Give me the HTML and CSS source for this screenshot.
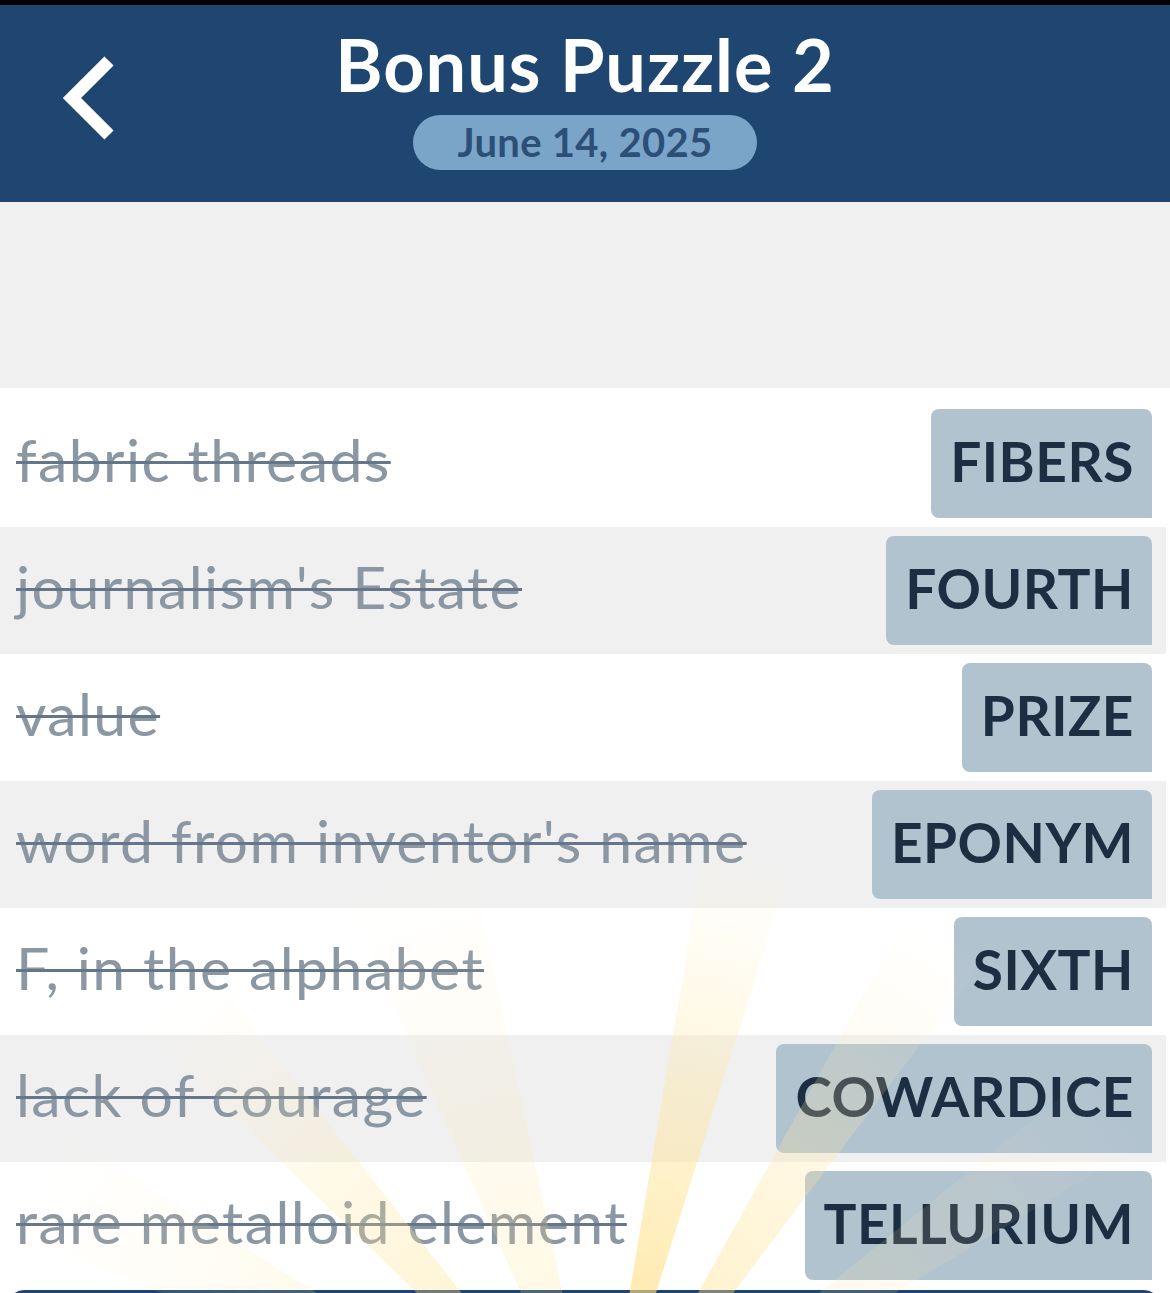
FILE: index.html
```html
<!DOCTYPE html>
<html lang="en">
<head>
<meta charset="utf-8">
<title>Bonus Puzzle 2</title>
<link rel="stylesheet" href="styles.css">
</head>
<body>
<div class="app">
  <div class="status"></div>
  <header class="header">
    <div class="back">
      <svg width="130" height="190" viewBox="0 0 130 190" aria-hidden="true">
        <polyline points="109,56 72,93 109,130" fill="none" stroke="#ffffff" stroke-width="13" stroke-linejoin="miter" stroke-linecap="butt"/>
      </svg>
    </div>
    <div class="titles">
      <h1 class="title">Bonus Puzzle 2</h1>
      <div class="date">June 14, 2025</div>
    </div>
    <div class="side"></div>
  </header>
  <div class="spacer"></div>
  <ul class="list">
    <li class="row"><span class="clue">fabric threads</span><span class="tile">FIBERS</span></li>
    <li class="row alt"><span class="clue">journalism's Estate</span><span class="tile">FOURTH</span></li>
    <li class="row"><span class="clue">value</span><span class="tile">PRIZE</span></li>
    <li class="row alt"><span class="clue">word from inventor's name</span><span class="tile">EPONYM</span></li>
    <li class="row"><span class="clue">F, in the alphabet</span><span class="tile">SIXTH</span></li>
    <li class="row alt"><span class="clue">lack of courage</span><span class="tile">COWARDICE</span></li>
    <li class="row"><span class="clue">rare metalloid element</span><span class="tile">TELLURIUM</span></li>
  </ul>
  <div class="bottom-bar"></div>
  <svg class="rays" width="1170" height="1293" viewBox="0 0 1170 1293" aria-hidden="true">
    <defs>
      <radialGradient id="fade" cx="600" cy="1470" r="640" gradientUnits="userSpaceOnUse">
        <stop offset="0.25" stop-color="#ffdf85" stop-opacity="0.75"/>
        <stop offset="0.6" stop-color="#ffe59c" stop-opacity="0.45"/>
        <stop offset="1" stop-color="#fff0c4" stop-opacity="0"/>
      </radialGradient>
    </defs>
    <g fill="url(#fade)">
      <polygon points="600,1470 -142,1170 -78,1046" opacity="0.35"/>
      <polygon points="600,1470 25,914 107,840" opacity="0.55"/>
      <polygon points="600,1470 274,739 434,688" opacity="0.3"/>
      <polygon points="600,1470 732,681 841,707" opacity="0.9"/>
      <polygon points="600,1470 988,770 1081,831" opacity="0.6"/>
      <polygon points="600,1470 1222,967 1286,1058" opacity="0.3"/>
    </g>
  </svg>
</div>
</body>
</html>
```

FILE: styles.css
```css
* {
  box-sizing: border-box;
}

html, body {
  margin: 0;
  padding: 0;
  background: #ffffff;
}

body {
  font-family: Lato, "Noto Sans", "Liberation Sans", sans-serif;
  width: 1170px;
  height: 1293px;
  overflow: hidden;
}

.app {
  position: relative;
  width: 1170px;
  height: 1293px;
  overflow: hidden;
  background: #ffffff;
}

.status {
  height: 5px;
  background: #000000;
}

.header {
  height: 197px;
  background: #1e4670;
  display: grid;
  grid-template-columns: 1fr auto 1fr;
  align-items: start;
}

.back {
  display: flex;
}

.back svg {
  display: block;
}

.titles {
  display: flex;
  flex-direction: column;
  align-items: center;
  padding-top: 17px;
}

.title {
  margin: 0;
  color: #ffffff;
  font-weight: 700;
  font-size: 72px;
  line-height: 84px;
  letter-spacing: 1px;
}

.date {
  margin-top: 9px;
  width: 344px;
  height: 55px;
  border-radius: 28px;
  background: #7ba5c8;
  color: #2b4f77;
  font-weight: 700;
  font-size: 40px;
  line-height: 55px;
  text-align: center;
  letter-spacing: 0.3px;
}

.spacer {
  height: 186px;
  background: #f0f0f0;
}

.list {
  list-style: none;
  margin: 0;
  padding: 12px 0 0 0;
  width: 1166px;
  background: #ffffff;
}

.row {
  height: 127px;
  display: flex;
  align-items: center;
  justify-content: space-between;
  padding: 0 14px 0 16px;
  background: #ffffff;
}

.row.alt {
  background: #f0f0f0;
}

.clue {
  padding-bottom: 8px;
  font-size: 59px;
  color: #8b97a3;
  text-decoration: line-through;
  text-decoration-color: #66768a;
  text-decoration-thickness: 3px;
  white-space: nowrap;
  letter-spacing: 1.4px;
}

.tile {
  height: 109px;
  display: flex;
  align-items: center;
  padding: 0 18px 6px 19px;
  background: #b2c3d0;
  border-radius: 8px 8px 0 8px;
  color: #1c2e42;
  font-weight: 700;
  font-size: 55px;
  letter-spacing: 0.5px;
  white-space: nowrap;
}

.bottom-bar {
  margin: 1px 10px 0 8px;
  height: 40px;
  background: #1e4670;
  border-radius: 16px 16px 0 0;
}

.rays {
  position: absolute;
  left: 0;
  top: 0;
  pointer-events: none;
}
```
